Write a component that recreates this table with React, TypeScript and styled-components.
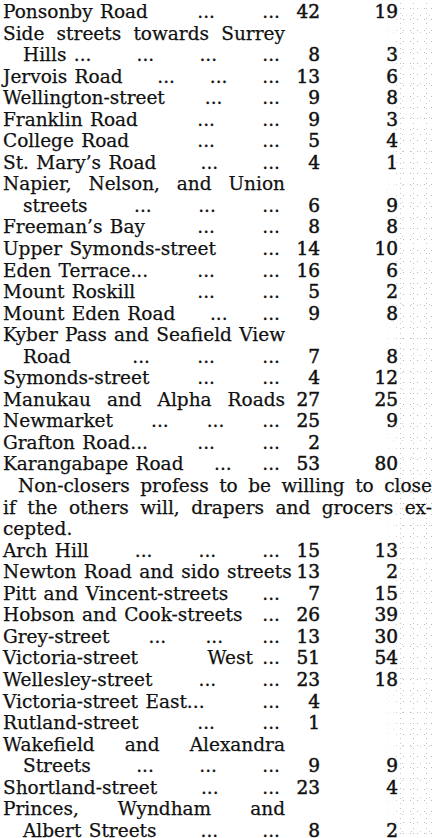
import React from "react";
import styled, { createGlobalStyle } from "styled-components";

const Global = createGlobalStyle`
  html, body {
    margin: 0;
    padding: 0;
  }
  body {
    width: 432px;
    min-height: 838px;
    overflow: hidden;
    background-color: #fff;
    background-image:
      linear-gradient(90deg, #fff 0, #fff 384px, rgba(255,255,255,0) 402px),
      radial-gradient(circle, rgba(60,60,60,0.35) 0.7px, transparent 1px),
      radial-gradient(circle, rgba(60,60,60,0.3) 0.6px, transparent 1px),
      radial-gradient(circle, rgba(60,60,60,0.25) 0.7px, transparent 1px);
    background-size: 100% 100%, 7px 11px, 13px 5px, 9px 17px;
    background-position: 0 0, 1px 3px, 4px 1px, 2px 7px;
  }
`;

const Page = styled.div`
  width: 432px;
  box-sizing: border-box;
  padding: 1px 0 0 3px;
  font-family: "DejaVu Serif", "Liberation Serif", serif;
  font-size: 18.5px;
  line-height: 21.55px;
  word-spacing: 1.5px;
  color: #111;
  -webkit-text-stroke: 0.25px #111;
`;

const Row = styled.div`
  display: grid;
  grid-template-columns: 277px 40px 78px;
  height: 21.55px;
  white-space: nowrap;
`;

const Label = styled.div<{ $indent?: boolean }>`
  display: flex;
  padding-left: ${(p) => (p.$indent ? "20px" : "0")};
  min-width: 0;
`;

const Name = styled.span<{ $spread?: number }>`
  flex: ${(p) => (p.$spread ? "none" : "1")};
  width: ${(p) => (p.$spread ? `${p.$spread}px` : "auto")};
  display: flex;
  justify-content: ${(p) => (p.$spread ? "space-between" : "flex-start")};
`;

const Leader = styled.span`
  width: 65px;
  text-align: right;
`;

const Num = styled.span`
  text-align: right;
  -webkit-text-stroke: 0.5px #111;
`;

const Head = styled.div`
  width: 282px;
  height: 21.55px;
  white-space: nowrap;
  display: flex;
  justify-content: space-between;
`;

const Para = styled.div<{ $indent?: boolean; $justify?: boolean }>`
  width: 429px;
  height: 21.55px;
  white-space: nowrap;
  display: flex;
  justify-content: ${(p) => (p.$justify ? "space-between" : "flex-start")};
  padding-left: ${(p) => (p.$indent ? "15px" : "0")};
  box-sizing: border-box;
  gap: 6px;
`;

type Item =
  | { k: "e"; t: string; l: number; a?: string; b?: string; i?: boolean; w?: number }
  | { k: "h"; t: string }
  | { k: "p"; t: string; i?: boolean; j?: boolean };

const items: Item[] = [
  { k: "e", t: "Ponsonby Road", l: 2, a: "42", b: "19" },
  { k: "h", t: "Side streets towards Surrey" },
  { k: "e", t: "Hills ...", l: 3, a: "8", b: "3", i: true },
  { k: "e", t: "Jervois Road", l: 3, a: "13", b: "6" },
  { k: "e", t: "Wellington-street", l: 2, a: "9", b: "8" },
  { k: "e", t: "Franklin Road", l: 2, a: "9", b: "3" },
  { k: "e", t: "College Road", l: 2, a: "5", b: "4" },
  { k: "e", t: "St. Mary\u2019s Road", l: 2, a: "4", b: "1" },
  { k: "h", t: "Napier, Nelson, and Union" },
  { k: "e", t: "streets", l: 3, a: "6", b: "9", i: true },
  { k: "e", t: "Freeman\u2019s Bay", l: 2, a: "8", b: "8" },
  { k: "e", t: "Upper Symonds-street", l: 1, a: "14", b: "10" },
  { k: "e", t: "Eden Terrace...", l: 2, a: "16", b: "6" },
  { k: "e", t: "Mount Roskill", l: 2, a: "5", b: "2" },
  { k: "e", t: "Mount Eden Road", l: 2, a: "9", b: "8" },
  { k: "h", t: "Kyber Pass and Seafield View" },
  { k: "e", t: "Road", l: 3, a: "7", b: "8", i: true },
  { k: "e", t: "Symonds-street", l: 2, a: "4", b: "12" },
  { k: "e", t: "Manukau and Alpha Roads", l: 0, a: "27", b: "25", w: 282 },
  { k: "e", t: "Newmarket", l: 3, a: "25", b: "9" },
  { k: "e", t: "Grafton Road...", l: 2, a: "2" },
  { k: "e", t: "Karangabape Road", l: 2, a: "53", b: "80" },
  { k: "p", t: "Non-closers profess to be willing to close", i: true, j: true },
  { k: "p", t: "if the others will, drapers and grocers ex-", j: true },
  { k: "p", t: "cepted." },
  { k: "e", t: "Arch Hill", l: 3, a: "15", b: "13" },
  { k: "e", t: "Newton Road and sido streets", l: 0, a: "13", b: "2" },
  { k: "e", t: "Pitt and Vincent-streets", l: 1, a: "7", b: "15" },
  { k: "e", t: "Hobson and Cook-streets", l: 1, a: "26", b: "39" },
  { k: "e", t: "Grey-street", l: 3, a: "13", b: "30" },
  { k: "e", t: "Victoria-street West", l: 1, a: "51", b: "54", w: 250 },
  { k: "e", t: "Wellesley-street", l: 2, a: "23", b: "18" },
  { k: "e", t: "Victoria-street East...", l: 1, a: "4" },
  { k: "e", t: "Rutland-street", l: 2, a: "1" },
  { k: "h", t: "Wakefield and Alexandra" },
  { k: "e", t: "Streets", l: 3, a: "9", b: "9", i: true },
  { k: "e", t: "Shortland-street", l: 2, a: "23", b: "4" },
  { k: "h", t: "Princes, Wyndham and" },
  { k: "e", t: "Albert Streets", l: 2, a: "8", b: "2", i: true },
];

const words = (t: string) => t.split(" ").map((w, i) => <span key={i}>{w}</span>);

export default function App() {
  return (
    <>
      <Global />
      <Page>
        {items.map((it, idx) => {
          if (it.k === "h") return <Head key={idx}>{words(it.t)}</Head>;
          if (it.k === "p")
            return (
              <Para key={idx} $indent={it.i} $justify={it.j}>
                {it.j ? words(it.t) : it.t}
              </Para>
            );
          return (
            <Row key={idx}>
              <Label $indent={it.i}>
                <Name $spread={it.w}>{it.w ? words(it.t) : it.t}</Name>
                {Array.from({ length: it.l }).map((_, j) => (
                  <Leader key={j}>...</Leader>
                ))}
              </Label>
              <Num>{it.a ?? ""}</Num>
              <Num>{it.b ?? ""}</Num>
            </Row>
          );
        })}
      </Page>
    </>
  );
}
